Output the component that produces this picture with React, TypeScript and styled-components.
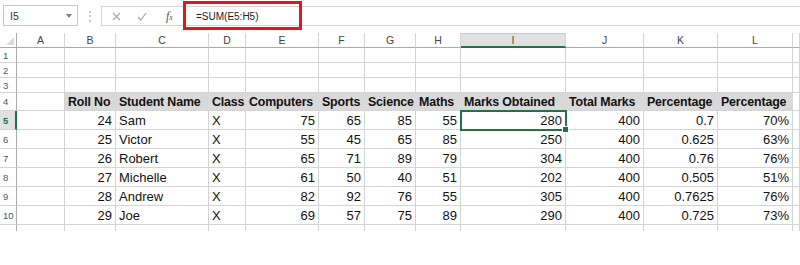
import React from "react";
import styled, { createGlobalStyle, css } from "styled-components";

const GlobalStyle = createGlobalStyle`
  body {
    margin: 0;
    background: #ffffff;
    font-family: "Liberation Sans", Arial, sans-serif;
  }
`;

const Page = styled.div`
  width: 800px;
  height: 265px;
  overflow: hidden;
  background: #ffffff;
  position: relative;
`;

// ---- formula toolbar ----

const Toolbar = styled.div`
  height: 33px;
  display: flex;
  align-items: flex-start;
  padding-top: 5px;
  box-sizing: border-box;
`;

const NameBox = styled.div`
  margin-left: 3px;
  width: 75px;
  height: 21px;
  box-sizing: border-box;
  border: 1px solid #c6c6c6;
  display: flex;
  align-items: center;
  justify-content: space-between;
  padding: 0 5px 0 6px;
  font-size: 10.5px;
  color: #333;
`;

const Caret = styled.span`
  width: 0;
  height: 0;
  border-left: 3px solid transparent;
  border-right: 3px solid transparent;
  border-top: 4px solid #808080;
`;

const Grip = styled.div`
  width: 23px;
  height: 21px;
  display: flex;
  align-items: center;
  justify-content: center;
  color: #b0b0b0;
  font-size: 12px;
`;

const FormulaBar = styled.div`
  flex: 1;
  height: 20px;
  margin-top: 1px;
  display: flex;
  box-sizing: border-box;
  border-top: 1px solid #d4d4d4;
  border-bottom: 1px solid #d4d4d4;
  border-left: 1px solid #d4d4d4;
`;

const FuncIcons = styled.div`
  width: 79px;
  display: flex;
  align-items: center;
  padding-left: 10px;
  gap: 16px;
  box-sizing: border-box;
`;

const Fx = styled.span`
  font-family: "Liberation Serif", serif;
  font-style: italic;
  font-size: 12px;
  color: #555;
  margin-left: 3px;
  sub {
    font-size: 8px;
    vertical-align: 0;
  }
`;

const FormulaText = styled.div`
  flex: 1;
  display: flex;
  align-items: center;
  padding-left: 15px;
  font-size: 10px;
  color: #222;
`;

const Callout = styled.div`
  position: absolute;
  left: 183px;
  top: 1px;
  width: 119px;
  height: 29px;
  box-sizing: border-box;
  border: 3px solid #e3151d;
`;

// ---- sheet grid ----

const GRID = "17px 48px 51px 93px 37px 73px 46px 51px 45px 105px 78px 74px 75px 7px";

const Sheet = styled.div`
  height: 198px;
  overflow: hidden;
`;

const Row = styled.div<{ $h: number }>`
  display: grid;
  grid-template-columns: ${GRID};
  height: ${p => p.$h}px;
`;

const ColHead = styled.div<{ $sel?: boolean }>`
  box-sizing: border-box;
  border-right: 1px solid #d4d4d4;
  border-bottom: 1px solid #ababab;
  display: flex;
  align-items: center;
  justify-content: center;
  font-size: 10.5px;
  color: #444;
  ${p =>
    p.$sel &&
    css`
      background: #e1e1e1;
      color: #1e6b40;
      border-top: 1px solid #c8c8c8;
      border-bottom: 2px solid #217346;
    `}
`;

const Corner = styled.div`
  box-sizing: border-box;
  border-right: 1px solid #ababab;
  border-bottom: 1px solid #ababab;
  position: relative;
  &::after {
    content: "";
    position: absolute;
    right: 2px;
    bottom: 2px;
    width: 0;
    height: 0;
    border-left: 8px solid transparent;
    border-bottom: 8px solid #dadada;
  }
`;

const RowHead = styled.div<{ $sel?: boolean }>`
  box-sizing: border-box;
  border-right: 1px solid #ababab;
  border-bottom: 1px solid #d4d4d4;
  display: flex;
  align-items: center;
  padding-left: 3px;
  font-size: 9.5px;
  color: #555;
  overflow: hidden;
  ${p =>
    p.$sel &&
    css`
      background: #e1e1e1;
      color: #217346;
      font-weight: bold;
      border-right: 2px solid #217346;
    `}
`;

const Cell = styled.div<{ $align: "left" | "right"; $head?: boolean; $active?: boolean }>`
  box-sizing: border-box;
  border-right: 1px solid #d4d4d4;
  border-bottom: 1px solid #d4d4d4;
  display: flex;
  align-items: center;
  justify-content: ${p => (p.$align === "right" ? "flex-end" : "flex-start")};
  padding: 1px 3px 0 3px;
  font-size: 13px;
  color: #111;
  white-space: nowrap;
  position: relative;
  ${p =>
    p.$head &&
    css`
      background: #d9d9d9;
      border-right-color: #d9d9d9;
      font-weight: bold;
      font-size: 12.4px;
      letter-spacing: -0.15px;
      padding-left: 3px;
    `}
  ${p =>
    p.$active &&
    css`
      outline: 2px solid #217346;
      outline-offset: -1px;
      z-index: 1;
      &::after {
        content: "";
        position: absolute;
        right: -4px;
        bottom: -4px;
        width: 5px;
        height: 5px;
        background: #217346;
        border: 1px solid #fff;
      }
    `}
`;

const LETTERS = ["A", "B", "C", "D", "E", "F", "G", "H", "I", "J", "K", "L", ""];

const HEADERS = [
  "Roll No",
  "Student Name",
  "Class",
  "Computers",
  "Sports",
  "Science",
  "Maths",
  "Marks Obtained",
  "Total Marks",
  "Percentage",
  "Percentage",
];

const DATA: (string | number)[][] = [
  [24, "Sam", "X", 75, 65, 85, 55, 280, 400, "0.7", "70%"],
  [25, "Victor", "X", 55, 45, 65, 85, 250, 400, "0.625", "63%"],
  [26, "Robert", "X", 65, 71, 89, 79, 304, 400, "0.76", "76%"],
  [27, "Michelle", "X", 61, 50, 40, 51, 202, 400, "0.505", "51%"],
  [28, "Andrew", "X", 82, 92, 76, 55, 305, 400, "0.7625", "76%"],
  [29, "Joe", "X", 69, 57, 75, 89, 290, 400, "0.725", "73%"],
];

const emptyRow = (n: number, h: number) => (
  <Row $h={h} key={n}>
    <RowHead>{n}</RowHead>
    {LETTERS.map((l, i) => (
      <Cell key={i} $align="left" />
    ))}
  </Row>
);

const X = () => (
  <svg width="9" height="9" viewBox="0 0 9 9">
    <path d="M1 1 L8 8 M8 1 L1 8" stroke="#a8a8a8" strokeWidth="1.2" />
  </svg>
);

const Check = () => (
  <svg width="10" height="9" viewBox="0 0 10 9">
    <path d="M1 5 L3.8 8 L9 1" stroke="#a8a8a8" strokeWidth="1.2" fill="none" />
  </svg>
);

export default function App() {
  return (
    <Page>
      <GlobalStyle />
      <Toolbar>
        <NameBox>
          <span>I5</span>
          <Caret />
        </NameBox>
        <Grip>⋮</Grip>
        <FormulaBar>
          <FuncIcons>
            <X />
            <Check />
            <Fx>
              f<sub>x</sub>
            </Fx>
          </FuncIcons>
          <FormulaText>=SUM(E5:H5)</FormulaText>
        </FormulaBar>
      </Toolbar>
      <Callout />
      <Sheet>
        <Row $h={15}>
          <Corner />
          {LETTERS.map((l, i) => (
            <ColHead key={i} $sel={l === "I"}>
              {l}
            </ColHead>
          ))}
        </Row>
        {emptyRow(1, 15)}
        {emptyRow(2, 15)}
        {emptyRow(3, 15)}
        <Row $h={18}>
          <RowHead>4</RowHead>
          <Cell $align="left" />
          {HEADERS.map((h, i) => (
            <Cell key={i} $align="left" $head>
              {h}
            </Cell>
          ))}
          <Cell $align="left" />
        </Row>
        {DATA.map((r, ri) => (
          <Row $h={19} key={ri}>
            <RowHead $sel={ri === 0}>{ri + 5}</RowHead>
            <Cell $align="left" />
            {r.map((v, ci) => (
              <Cell
                key={ci}
                $align={ci === 1 || ci === 2 ? "left" : "right"}
                $active={ri === 0 && ci === 7}
              >
                {v}
              </Cell>
            ))}
            <Cell $align="left" />
          </Row>
        ))}
        {emptyRow(11, 19)}
      </Sheet>
    </Page>
  );
}
